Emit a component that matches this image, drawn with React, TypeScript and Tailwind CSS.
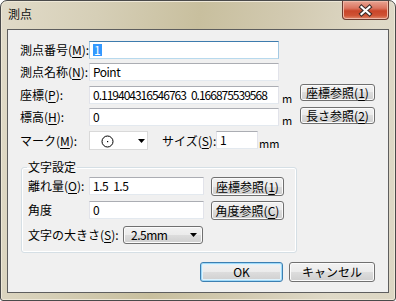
import type { ReactNode } from 'react';

const font = "font-['Noto_Sans_CJK_JP','Noto_Sans',sans-serif]";

function U({ children }: { children: ReactNode }) {
  return <span className="underline decoration-1 underline-offset-[2px]">{children}</span>;
}

function Label({ className = '', children }: { className?: string; children: ReactNode }) {
  return (
    <span className={`shrink-0 whitespace-nowrap text-[12px] leading-[14px] ${className}`}>{children}</span>
  );
}

function Button({
  children,
  className = '',
  def = false,
}: {
  children: ReactNode;
  className?: string;
  def?: boolean;
}) {
  return (
    <button
      className={`flex shrink-0 items-center justify-center whitespace-nowrap rounded-[3px] border bg-[linear-gradient(#f2f2f2_0%,#ebebeb_50%,#dddddd_50%,#cfcfcf_100%)] text-[12px] leading-[12px] text-black ${
        def
          ? 'border-[#3c7fb1] shadow-[inset_0_0_0_1px_#9fd9f8,inset_0_0_0_2px_#dff3fd]'
          : 'border-[#707070] shadow-[inset_0_0_0_1px_#fbfbfb]'
      } ${className}`}
    >
      {children}
    </button>
  );
}

function TextBox({
  children,
  className = '',
  focused = false,
}: {
  children?: ReactNode;
  className?: string;
  focused?: boolean;
}) {
  return (
    <div
      className={`flex shrink-0 items-center overflow-hidden whitespace-nowrap border bg-white pl-[3px] text-[12px] leading-[12px] text-black ${
        focused
          ? 'border-[#a4c9e3] border-t-[#3d7bad] border-b-[#b7d9ed]'
          : 'border-[#e2e3ea] border-t-[#abadb3] border-b-[#e3e9ef]'
      } ${className}`}
    >
      {children}
    </div>
  );
}

function Arrow({ className = '' }: { className?: string }) {
  return (
    <svg className={`shrink-0 ${className}`} width="7" height="4" viewBox="0 0 7 4">
      <path d="M0 0H7L3.5 4Z" fill="#000" />
    </svg>
  );
}

export default function App() {
  return (
    <div className={`h-[301px] w-[396px] bg-white ${font}`}>
      <div className="flex h-full w-full flex-col rounded-t-[7px] rounded-b-[3px] border border-[#4a4a4a] bg-[linear-gradient(100deg,#e1dbc9_0%,#d6cfb7_22%,#c8bf9e_45%,#d2cab1_65%,#dfd9c7_85%,#dcd6c3_100%)] shadow-[inset_0_0_0_1px_#eee8d8]">
        {/* title bar */}
        <div className="flex h-[28px] shrink-0 items-start justify-between">
          <span className="pl-[7px] pt-[6px] text-[12px] leading-[14px] text-[#111]">測点</span>
          <button className="mr-[6px] flex h-[19px] w-[47px] items-center justify-center rounded-b-[4px] border border-t-0 border-[#6b3b30] bg-[linear-gradient(#e8a493_0%,#db7560_40%,#c9452a_55%,#cf5234_80%,#e08a6e_100%)] shadow-[inset_0_0_0_1px_#f0b7a6]">
            <svg width="15" height="13" viewBox="-1 -1 15 13">
              <path d="M2.5 2L10.5 9M10.5 2L2.5 9" stroke="#3b2a27" strokeWidth="4.2" strokeLinecap="square" />
              <path d="M2.5 2L10.5 9M10.5 2L2.5 9" stroke="#fff" strokeWidth="2.2" strokeLinecap="square" />
            </svg>
          </button>
        </div>

        {/* client area */}
        <div className="mx-[6px] mb-[7px] flex flex-1 flex-col border border-[#5e5e5e] bg-[#f0f0f0] pl-[12px] pt-[11px] text-black">
          <div className="flex h-[18px] items-center">
            <Label className="w-[69px]">
              測点番号(<U>M</U>):
            </Label>
            <TextBox focused className="h-[18px] w-[190px]">
              <span className="bg-[#3399ff] px-[1px] text-white">1</span>
            </TextBox>
          </div>

          <div className="mt-[4px] flex h-[18px] items-center">
            <Label className="w-[69px]">
              測点名称(<U>N</U>):
            </Label>
            <TextBox className="h-[18px] w-[190px] tracking-[-0.5px]">Point</TextBox>
          </div>

          <div className="mt-[5px] flex h-[18px] items-center">
            <Label className="w-[69px]">
              座標(<U>P</U>):
            </Label>
            <TextBox className="h-[18px] w-[190px] tracking-[-1px]">
              <span>0.119404316546763</span>
              <span className="ml-[5px]">0.166875539568</span>
            </TextBox>
            <span className="w-[21px] shrink-0 self-end pl-[3px] text-[11px] leading-[11px]">m</span>
            <Button className="mb-[5px] h-[17px] w-[75px]">
              座標参照(<U>1</U>)
            </Button>
          </div>

          <div className="mt-[4px] flex h-[18px] items-center">
            <Label className="w-[69px]">
              標高(<U>H</U>):
            </Label>
            <TextBox className="h-[18px] w-[190px]">0</TextBox>
            <span className="w-[21px] shrink-0 self-end pl-[3px] text-[11px] leading-[11px]">m</span>
            <Button className="mb-[3px] h-[17px] w-[75px]">
              長さ参照(<U>2</U>)
            </Button>
          </div>

          <div className="mt-[5px] flex h-[19px] items-center">
            <Label className="w-[69px]">
              マーク(<U>M</U>):
            </Label>
            <div className="flex h-[19px] w-[59px] shrink-0 items-center border border-[#d9d9d9] bg-white">
              <svg className="ml-[11px] mt-[2px] shrink-0" width="13" height="13" viewBox="0 0 13 13">
                <circle cx="6.5" cy="6.5" r="5.5" fill="none" stroke="#000" strokeWidth="1" />
                <rect x="6" y="6" width="1.2" height="1.2" fill="#000" />
              </svg>
              <Arrow className="ml-auto mr-[2px]" />
            </div>
            <Label className="ml-[14px] w-[54px]">
              サイズ(<U>S</U>):
            </Label>
            <TextBox className="h-[18px] w-[42px] self-start">1</TextBox>
            <span className="mb-[1px] ml-[1px] shrink-0 self-end text-[11px] leading-[11px]">mm</span>
          </div>

          {/* group box */}
          <fieldset className="ml-[1px] mt-[10px] w-[276px] rounded-[3px] border border-[#d5dfe5] px-[6px] pb-[8px] pt-[3px] shadow-[inset_0_0_0_1px_#fff]">
            <legend className="-ml-[1px] px-[1px] text-[12px] leading-[14px]">文字設定</legend>

            <div className="flex h-[18px] items-center">
              <Label className="w-[61px]">
                離れ量(<U>O</U>):
              </Label>
              <TextBox className="h-[18px] w-[115px] tracking-[-0.5px]">
                <span>1.5</span>
                <span className="ml-[5px]">1.5</span>
              </TextBox>
              <Button className="ml-[7px] h-[19px] w-[73px] self-start">
                座標参照(<U>1</U>)
              </Button>
            </div>

            <div className="mt-[6px] flex h-[18px] items-center">
              <Label className="w-[61px]">角度</Label>
              <TextBox className="h-[18px] w-[115px]">0</TextBox>
              <Button className="ml-[7px] h-[19px] w-[73px] self-start">
                角度参照(<U>C</U>)
              </Button>
            </div>

            <div className="mt-[7px] flex h-[18px] items-center">
              <Label className="w-[95px]">
                文字の大きさ(<U>S</U>):
              </Label>
              <div className="flex h-[18px] w-[80px] shrink-0 items-center rounded-[3px] border border-[#707070] bg-[linear-gradient(#f2f2f2_0%,#ebebeb_50%,#dddddd_50%,#cfcfcf_100%)] pl-[7px] text-[12px] leading-[12px] tracking-[-0.5px] shadow-[inset_0_0_0_1px_#fbfbfb]">
                2.5mm
                <Arrow className="ml-auto mr-[5px]" />
              </div>
            </div>
          </fieldset>

          <div className="mt-[9px] flex justify-end gap-[6px] pr-[13px]">
            <Button def className="h-[20px] w-[83px]">
              OK
            </Button>
            <Button className="h-[20px] w-[86px]">キャンセル</Button>
          </div>
        </div>
      </div>
    </div>
  );
}
